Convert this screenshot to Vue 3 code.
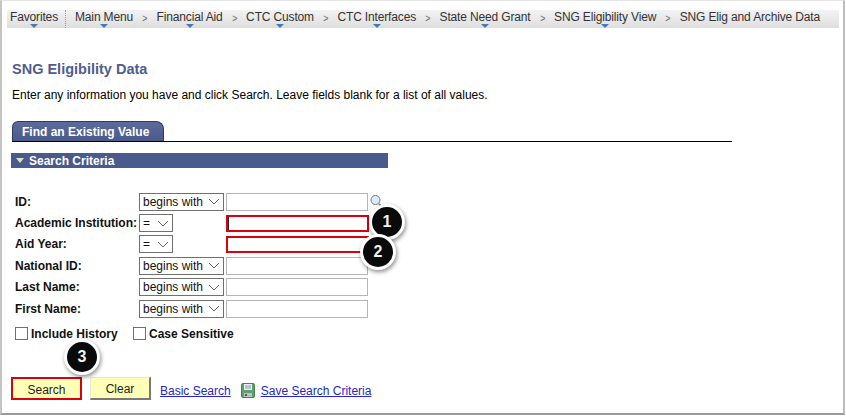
<template>
  <div class="frame">
    <nav class="crumbs">
      <span class="crumb fav">Favorites<i class="drop" /></span>
      <span class="sep" />
      <template v-for="(item, i) in crumbs" :key="item.label">
        <span v-if="i" class="gt">&gt;</span>
        <span class="crumb">{{ item.label }}<i v-if="item.menu" class="drop" /></span>
      </template>
    </nav>

    <h1 class="title">SNG Eligibility Data</h1>
    <p class="intro">Enter any information you have and click Search. Leave fields blank for a list of all values.</p>

    <div class="tabline">
      <div class="tab">Find an Existing Value</div>
    </div>

    <div class="section"><i class="tri" />Search Criteria</div>

    <div class="form">
      <div
        v-for="row in rows"
        :key="row.label"
        class="row"
      >
        <label class="label">{{ row.label }}</label>
        <span class="select" :class="{ short: row.op === '=' }">
          {{ row.op }}
          <svg width="12" height="7" viewBox="0 0 12 7"><path d="M1 1l5 5 5-5" fill="none" stroke="#666" /></svg>
        </span>
        <span class="input" :class="{ required: row.required, caret: row.caret }" />
        <svg v-if="row.lookup" class="lookup" width="14" height="15" viewBox="0 0 14 15">
          <path d="M9 10l4 4" stroke="#8a8a55" stroke-width="2" />
          <circle cx="5.5" cy="6" r="4.5" fill="#dcecf6" stroke="#6d7d88" />
        </svg>
      </div>
    </div>

    <div class="checks">
      <label class="check"><span class="box" />Include History</label>
      <label class="check"><span class="box" />Case Sensitive</label>
    </div>

    <div class="actions">
      <button class="btn search" type="button">Search</button>
      <button class="btn clear" type="button">Clear</button>
      <a class="link basic">Basic Search</a>
      <svg class="save" width="14" height="15" viewBox="0 0 14 15">
        <rect x="0.5" y="0.5" width="13" height="14" rx="1.5" fill="#5f9e6e" stroke="#4c8059" />
        <rect x="3" y="1" width="8" height="6" fill="#e9eef2" />
        <path d="M4 3h6M4 5h6" stroke="#8a9aa6" />
        <rect x="3" y="10" width="8" height="4" fill="#b9c2c9" />
        <rect x="4" y="11" width="2" height="2" fill="#556" />
      </svg>
      <a class="link">Save Search Criteria</a>
    </div>

    <span class="marker m1">1</span>
    <span class="marker m2">2</span>
    <span class="marker m3">3</span>
  </div>
</template>

<script setup>
const crumbs = [
  { label: 'Main Menu', menu: true },
  { label: 'Financial Aid', menu: true },
  { label: 'CTC Custom', menu: true },
  { label: 'CTC Interfaces', menu: true },
  { label: 'State Need Grant', menu: true },
  { label: 'SNG Eligibility View', menu: true },
  { label: 'SNG Elig and Archive Data', menu: false }
]

const rows = [
  { label: 'ID:', op: 'begins with', lookup: true },
  { label: 'Academic Institution:', op: '=', required: true, caret: true },
  { label: 'Aid Year:', op: '=', required: true },
  { label: 'National ID:', op: 'begins with' },
  { label: 'Last Name:', op: 'begins with' },
  { label: 'First Name:', op: 'begins with' }
]
</script>

<style>
html,
body {
  margin: 0;
  background: #fff;
}
</style>

<style scoped>
.frame {
  position: relative;
  box-sizing: border-box;
  width: 845px;
  height: 415px;
  padding: 9px 5px 0;
  border-left: 2px solid #c4c4c4;
  border-right: 2px solid #bdbdbd;
  border-bottom: 2px solid #9a9a9a;
  border-top: 1px solid #e4e4e4;
  overflow: hidden;
  font-family: "Liberation Sans", Arial, sans-serif;
  font-size: 12px;
  color: #000;
}

.crumbs {
  display: flex;
  align-items: flex-start;
  width: 832px;
  height: 18px;
  padding-left: 3px;
  box-sizing: border-box;
  background: linear-gradient(#f3f3f3, #dedede);
  color: #333;
  letter-spacing: -0.15px;
  line-height: 15px;
}

.crumb {
  position: relative;
  white-space: nowrap;
}

.fav {
  margin-right: 7px;
}

.sep {
  width: 0;
  height: 18px;
  margin-right: 9px;
  border-left: 1px dotted #999;
}

.gt {
  width: 23.5px;
  text-align: center;
  font-size: 11px;
  color: #666;
  transform: scaleX(0.8);
  line-height: 17px;
}

.drop {
  position: absolute;
  left: 50%;
  bottom: -3px;
  margin-left: -4px;
  border-left: 4px solid transparent;
  border-right: 4px solid transparent;
  border-top: 4px solid #4a78b4;
}

.title {
  margin: 33px 0 0 5px;
  font-size: 14.5px;
  line-height: 16px;
  font-weight: 700;
  color: #4f5d8f;
}

.intro {
  margin: 11px 0 0 5px;
  line-height: 14px;
}

.tabline {
  width: 720px;
  margin: 19px 0 0 5px;
  border-bottom: 1px solid #000;
}

.tab {
  box-sizing: border-box;
  width: 152px;
  height: 20px;
  padding: 3px 0 0 9px;
  border: 1px solid #2f3a63;
  border-bottom: 0;
  border-radius: 6px 8px 0 0;
  background: linear-gradient(#5d6b9b, #4a5a8c);
  color: #fff;
  font-weight: 700;
  line-height: 15px;
}

.section {
  display: flex;
  align-items: center;
  box-sizing: border-box;
  width: 377px;
  height: 15px;
  margin: 11px 0 0 4px;
  padding-left: 5px;
  background: #4a5a8c;
  color: #fff;
  font-weight: 700;
  line-height: 14px;
}

.tri {
  width: 0;
  height: 0;
  margin-right: 5px;
  border-left: 4px solid transparent;
  border-right: 4px solid transparent;
  border-top: 5px solid #e4dcc0;
}

.form {
  margin: 23px 0 0 8px;
}

.row {
  display: flex;
  align-items: center;
  height: 21.4px;
}

.label {
  width: 124px;
  flex: none;
  font-weight: 700;
  color: #111;
  white-space: nowrap;
}

.select {
  display: flex;
  align-items: center;
  justify-content: space-between;
  box-sizing: border-box;
  width: 85px;
  height: 18px;
  padding: 0 3px;
  border: 1px solid #707070;
  background: #fff;
  color: #111;
}

.select.short {
  width: 34px;
  margin-right: 53px;
}

.input {
  box-sizing: border-box;
  width: 142px;
  height: 18px;
  margin-left: 2px;
  border: 1px solid #b5b5b5;
  background: #fff;
}

.input.required {
  height: 17px;
  margin-left: 0;
  width: 143px;
  border: 2px solid #d9000f;
}

.input.caret {
  box-shadow: inset 1px 0 0 #222;
}

.lookup {
  margin-left: 2px;
}

.checks {
  display: flex;
  margin: 8px 0 0 8px;
  font-weight: 700;
  color: #111;
}

.check {
  display: flex;
  align-items: center;
  width: 118px;
  height: 14px;
}

.box {
  box-sizing: border-box;
  width: 13px;
  height: 13px;
  margin: -2px 3px 0 0;
  border: 1px solid #707070;
}

.actions {
  display: flex;
  align-items: center;
  margin: 36px 0 0 4px;
}

.btn {
  box-sizing: border-box;
  height: 23px;
  padding: 2px 0 0;
  border: 1px solid;
  border-color: #e8e8d0 #777 #777 #e8e8d0;
  background: #ffffb8;
  color: #222;
  font: 12px "Liberation Sans", Arial, sans-serif;
}

.search {
  width: 71px;
  border: 2px solid #d9000f;
}

.clear {
  width: 61px;
  margin-left: 8px;
  border-width: 1px 2px 2px 1px;
}

.link {
  margin-top: 4px;
  color: #2626c8;
  text-decoration: underline;
}

.basic {
  margin-left: 9px;
}

.save {
  margin: 4px 6px 0 10px;
}

.marker {
  position: absolute;
  display: flex;
  align-items: center;
  justify-content: center;
  box-sizing: border-box;
  width: 36px;
  height: 36px;
  border: 3px solid #fff;
  border-radius: 50%;
  background: #0a0a0a;
  box-shadow: 1px 2px 4px rgb(0 0 0 / 45%);
  color: #f2f2f2;
  font-size: 16px;
  font-weight: 700;
}

.m1 {
  left: 367px;
  top: 203px;
}

.m2 {
  left: 358px;
  top: 233px;
}

.m3 {
  left: 62px;
  top: 338px;
}
</style>
